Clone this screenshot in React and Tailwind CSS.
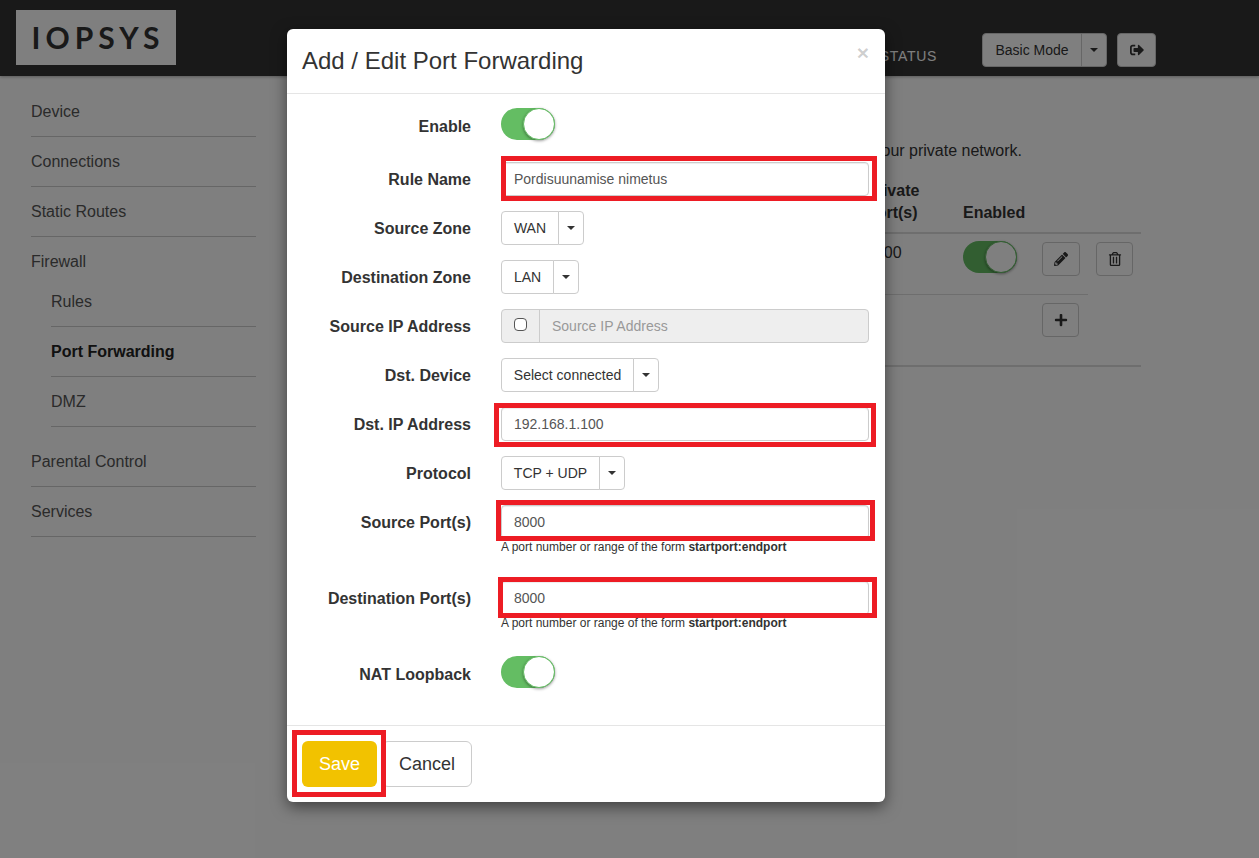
import { FaPencilAlt, FaPlus, FaRegTrashAlt, FaSignOutAlt } from "react-icons/fa";

const sans = "font-['Liberation_Sans',Arial,sans-serif]";

function Toggle() {
	return (
		<div className="relative h-8 w-[54px] shrink-0 rounded-full bg-[#64bd63]">
			<div className="absolute right-0 top-0 h-8 w-8 rounded-full border border-[#64bd63] bg-white shadow-[0_1px_3px_rgba(0,0,0,0.4)]"></div>
		</div>
	);
}

function Caret() {
	return <span className="inline-block border-x-4 border-t-4 border-x-transparent border-t-[#333]"></span>;
}

function SelectBtn({ label, w }) {
	return (
		<div className="flex h-[34px] text-sm text-[#333]">
			<div className={"flex items-center justify-center rounded-l border border-[#ccc] bg-white " + w}>{label}</div>
			<div className="-ml-px flex w-[26px] items-center justify-center rounded-r border border-[#ccc] bg-white">
				<Caret />
			</div>
		</div>
	);
}

function TextInput({ value }) {
	return (
		<input
			readOnly
			value={value}
			className="block h-[34px] w-full rounded border border-[#ccc] bg-white px-3 text-sm text-[#555] shadow-[inset_0_1px_1px_rgba(0,0,0,0.075)] outline-none"
		/>
	);
}

function Row({ label, frame, labelClass = "pt-0.5", className = "", children }) {
	return (
		<div className={"flex items-center " + className}>
			<label className={"w-[184px] shrink-0 text-right text-base font-bold leading-[22px] text-[#333] " + labelClass}>{label}</label>
			<div className="relative ml-[30px] w-[368px]">
				{children}
				{frame && <div className={"pointer-events-none absolute border-[#ed1c24] " + frame}></div>}
			</div>
		</div>
	);
}

function Help() {
	return (
		<div className="ml-[214px] text-xs leading-[14px] text-[#333]">
			A port number or range of the form <b>startport:endport</b>
		</div>
	);
}

function SideItem({ children, sub, active }) {
	return (
		<div
			className={
				"flex h-[50px] items-center border-b border-[#ccc] " +
				(sub ? "ml-5 " : "") +
				(active ? "font-bold text-[#222]" : "text-[#555]")
			}>
			{children}
		</div>
	);
}

function IconBtn({ w, children }) {
	return (
		<div className={"flex h-[34px] items-center justify-center rounded border border-[#ccc] bg-white " + w}>
			{children}
		</div>
	);
}

export default function App() {
	return (
		<div className={"relative h-[858px] overflow-hidden bg-white text-base " + sans}>
			{/* page behind the dialog */}
			<header className="flex h-[76px] bg-[#333] shadow-[0_1px_3px_rgba(0,0,0,0.3)]">
				<div className="ml-4 mt-2.5 flex h-[55px] w-40 items-center justify-center bg-white pb-px pl-1 font-['Lato',sans-serif] text-[30px] font-bold tracking-[5px] text-[#333]">
					IOPSYS
				</div>
				<div className="ml-auto mt-[46px] text-sm tracking-[0.7px] text-white">STATUS</div>
				<div className="ml-[45px] mr-[103px] mt-[33px] flex">
					<div className="flex h-[34px] text-sm text-[#333]">
						<div className="flex w-[100px] items-center justify-center rounded-l border border-[#ccc] bg-white">Basic Mode</div>
						<div className="-ml-px flex w-[26px] items-center justify-center rounded-r border border-[#ccc] bg-white">
							<Caret />
						</div>
					</div>
					<div className="ml-2.5">
						<IconBtn w="w-[39px]">
							<FaSignOutAlt className="text-sm text-[#333]" />
						</IconBtn>
					</div>
				</div>
			</header>

			<div className="flex">
				<aside className="ml-[31px] mt-[11px] w-[225px]">
					<SideItem>Device</SideItem>
					<SideItem>Connections</SideItem>
					<SideItem>Static Routes</SideItem>
					<div className="h-10 pt-3.5 leading-[22px] text-[#555]">Firewall</div>
					<SideItem sub>Rules</SideItem>
					<SideItem sub active>Port Forwarding</SideItem>
					<SideItem sub>DMZ</SideItem>
					<div className="mt-2.5">
						<SideItem>Parental Control</SideItem>
						<SideItem>Services</SideItem>
					</div>
				</aside>

				<main className="ml-auto mr-[118px] w-[275px] pt-16 text-[#333]">
					<p className="whitespace-nowrap pr-[119px] text-right leading-[22px]">your private network.</p>
					<div className="mt-[18px] grid grid-cols-[97px_178px] border-b-2 border-[#ddd] pb-2 font-bold leading-[22px]">
						<div>
							Private
							<br />
							Port(s)
						</div>
						<div className="self-end">Enabled</div>
					</div>
					<div className="flex h-[61px] w-[222px] border-b border-[#ddd] pt-[7px]">
						<div className="w-[97px] shrink-0 pt-px leading-[22px]">8000</div>
						<div className="w-[79px] shrink-0">
							<Toggle />
						</div>
						<div className="shrink-0 pt-px">
							<IconBtn w="w-[38px]">
								<FaPencilAlt className="text-sm text-[#333]" />
							</IconBtn>
						</div>
						<div className="ml-4 shrink-0 pt-px">
							<IconBtn w="w-[37px]">
								<FaRegTrashAlt className="text-sm text-[#333]" />
							</IconBtn>
						</div>
					</div>
					<div className="h-[72px] border-b-2 border-[#ddd] pl-[176px] pt-2">
						<IconBtn w="w-[37px]">
							<FaPlus className="text-sm text-[#333]" />
						</IconBtn>
					</div>
				</main>
			</div>

			{/* dialog */}
			<div className="absolute inset-0 bg-black/50 pl-[287px] pt-[29px]">
				<div className="h-[773px] w-[598px] rounded-md bg-white shadow-[0_5px_15px_rgba(0,0,0,0.5)]">
					<div className="flex h-[65px] border-b border-[#e5e5e5] pl-[15px] pr-4">
						<h4 className="mt-4 text-2xl leading-[32px] text-[#333]">Add / Edit Port Forwarding</h4>
						<span className="ml-auto mt-3 text-[21px] font-bold leading-6 text-black/20">×</span>
					</div>

					<div className="h-[631px] pt-3.5">
						<Row label="Enable" labelClass="pt-1.5">
							<Toggle />
						</Row>
						<Row label="Rule Name" className="mt-[22px]" frame="-top-1.5 -bottom-[5px] left-0 -right-2 border-[5px]">
							<TextInput value="Pordisuunamise nimetus" />
						</Row>
						<Row label="Source Zone" className="mt-[15px]">
							<SelectBtn label="WAN" w="w-[58px]" />
						</Row>
						<Row label="Destination Zone" className="mt-[15px]">
							<SelectBtn label="LAN" w="w-[53px]" />
						</Row>
						<Row label="Source IP Address" className="mt-[15px]">
							<div className="flex h-[34px] rounded border border-[#ccc] bg-[#eee] text-sm text-[#999]">
								<div className="flex w-[38px] items-center justify-center border-r border-[#ccc]">
									<input type="checkbox" disabled className="mb-[3px] h-[13px] w-[13px] appearance-none rounded-sm border border-[#555] bg-white" />
								</div>
								<div className="flex items-center pl-3">Source IP Address</div>
							</div>
						</Row>
						<Row label="Dst. Device" className="mt-[15px]">
							<SelectBtn label="Select connected" w="w-[133px]" />
						</Row>
						<Row label="Dst. IP Address" className="mt-[15px]" frame="-top-1 -bottom-1.5 -left-[7px] -right-[7px] border-[5px]">
							<TextInput value="192.168.1.100" />
						</Row>
						<Row label="Protocol" className="mt-[15px]">
							<SelectBtn label="TCP + UDP" w="w-[99px]" />
						</Row>
						<Row label="Source Port(s)" className="mt-[15px]" frame="-top-[5px] -bottom-0.5 -left-[5px] -right-1.5 border-[5px]">
							<TextInput value="8000" />
						</Row>
						<div className="h-[42px] pt-px">
							<Help />
						</div>
						<Row label="Destination Port(s)" frame="-top-1 -bottom-[3px] -left-[3px] -right-2 border-[5px]">
							<TextInput value="8000" />
						</Row>
						<div className="h-[41px] pt-px">
							<Help />
						</div>
						<Row label="NAT Loopback" labelClass="pt-1.5">
							<Toggle />
						</Row>
					</div>

					<div className="flex h-[77px] items-start border-t border-[#e5e5e5] pl-[15px] pt-[15px] text-lg">
						<div className="relative">
							<div className="flex h-[46px] w-[75px] items-center justify-center rounded-md bg-[#f2c200] text-white">Save</div>
							<div className="pointer-events-none absolute -bottom-2.5 -left-2.5 -right-[9px] -top-[11px] border-[5px] border-[#ed1c24]"></div>
						</div>
						<div className="ml-[5px] flex h-[46px] w-[90px] items-center justify-center rounded-md border border-[#ccc] text-[#333]">Cancel</div>
					</div>
				</div>
			</div>
		</div>
	);
}
